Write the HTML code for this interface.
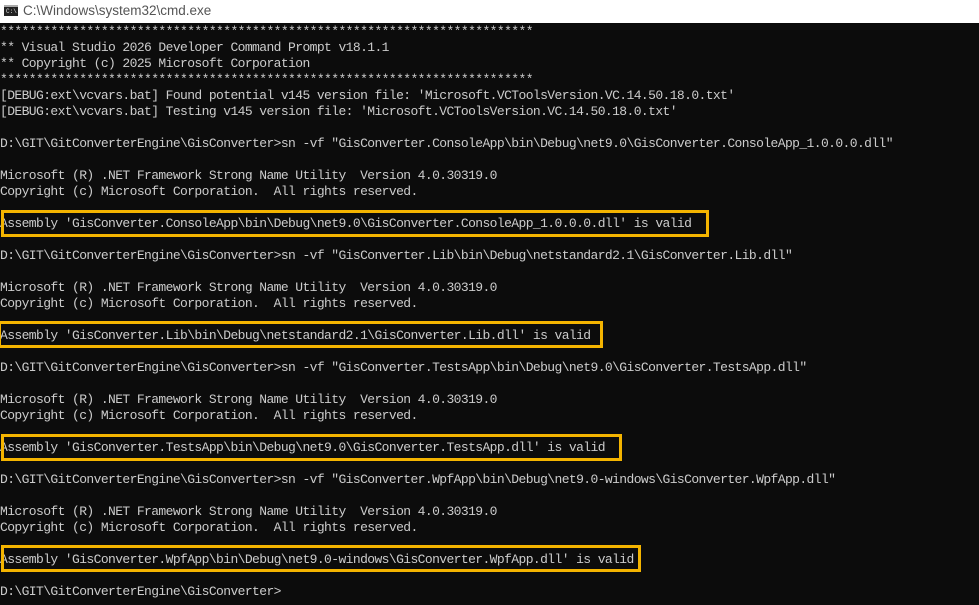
<!DOCTYPE html>
<html><head><meta charset="utf-8"><style>
html,body{margin:0;padding:0;width:979px;height:605px;overflow:hidden;background:#0c0c0c}
#t{position:absolute;left:0;top:0;width:979px;height:23px;background:#fff;font-family:"Liberation Sans",sans-serif;font-size:13.5px;color:#555}
#t span{position:absolute;left:23px;top:3px}
#ic{position:absolute;left:4px;top:5px;width:14px;height:11px;background:#222;border-top:2px solid #aaa;box-sizing:border-box}
#ic i{position:absolute;left:2px;top:2px;font-style:normal;color:#ddd;font-size:6px;font-family:"Liberation Mono",monospace;line-height:6px}
pre{position:absolute;left:0;top:24px;margin:0;font-family:"Liberation Mono",monospace;font-size:13px;letter-spacing:-0.6px;line-height:16px;color:#cccccc;white-space:pre}
.b{position:absolute;border:3px solid #f4b400;box-sizing:border-box}
</style></head><body>
<div id="t"><div id="ic"><i>C:\</i></div><span>C:\Windows\system32\cmd.exe</span></div>
<pre>**************************************************************************
** Visual Studio 2026 Developer Command Prompt v18.1.1
** Copyright (c) 2025 Microsoft Corporation
**************************************************************************
[DEBUG:ext\vcvars.bat] Found potential v145 version file: 'Microsoft.VCToolsVersion.VC.14.50.18.0.txt'
[DEBUG:ext\vcvars.bat] Testing v145 version file: 'Microsoft.VCToolsVersion.VC.14.50.18.0.txt'

D:\GIT\GitConverterEngine\GisConverter>sn -vf "GisConverter.ConsoleApp\bin\Debug\net9.0\GisConverter.ConsoleApp_1.0.0.0.dll"

Microsoft (R) .NET Framework Strong Name Utility  Version 4.0.30319.0
Copyright (c) Microsoft Corporation.  All rights reserved.

Assembly 'GisConverter.ConsoleApp\bin\Debug\net9.0\GisConverter.ConsoleApp_1.0.0.0.dll' is valid

D:\GIT\GitConverterEngine\GisConverter>sn -vf "GisConverter.Lib\bin\Debug\netstandard2.1\GisConverter.Lib.dll"

Microsoft (R) .NET Framework Strong Name Utility  Version 4.0.30319.0
Copyright (c) Microsoft Corporation.  All rights reserved.

Assembly 'GisConverter.Lib\bin\Debug\netstandard2.1\GisConverter.Lib.dll' is valid

D:\GIT\GitConverterEngine\GisConverter>sn -vf "GisConverter.TestsApp\bin\Debug\net9.0\GisConverter.TestsApp.dll"

Microsoft (R) .NET Framework Strong Name Utility  Version 4.0.30319.0
Copyright (c) Microsoft Corporation.  All rights reserved.

Assembly 'GisConverter.TestsApp\bin\Debug\net9.0\GisConverter.TestsApp.dll' is valid

D:\GIT\GitConverterEngine\GisConverter>sn -vf "GisConverter.WpfApp\bin\Debug\net9.0-windows\GisConverter.WpfApp.dll"

Microsoft (R) .NET Framework Strong Name Utility  Version 4.0.30319.0
Copyright (c) Microsoft Corporation.  All rights reserved.

Assembly 'GisConverter.WpfApp\bin\Debug\net9.0-windows\GisConverter.WpfApp.dll' is valid

D:\GIT\GitConverterEngine\GisConverter&gt;</pre>
<div class="b" style="left:1px;top:210px;width:708px;height:27px"></div>
<div class="b" style="left:-2px;top:321px;width:605px;height:27px"></div>
<div class="b" style="left:1px;top:434px;width:621px;height:27px"></div>
<div class="b" style="left:1px;top:545px;width:640px;height:27px"></div>
</body></html>
